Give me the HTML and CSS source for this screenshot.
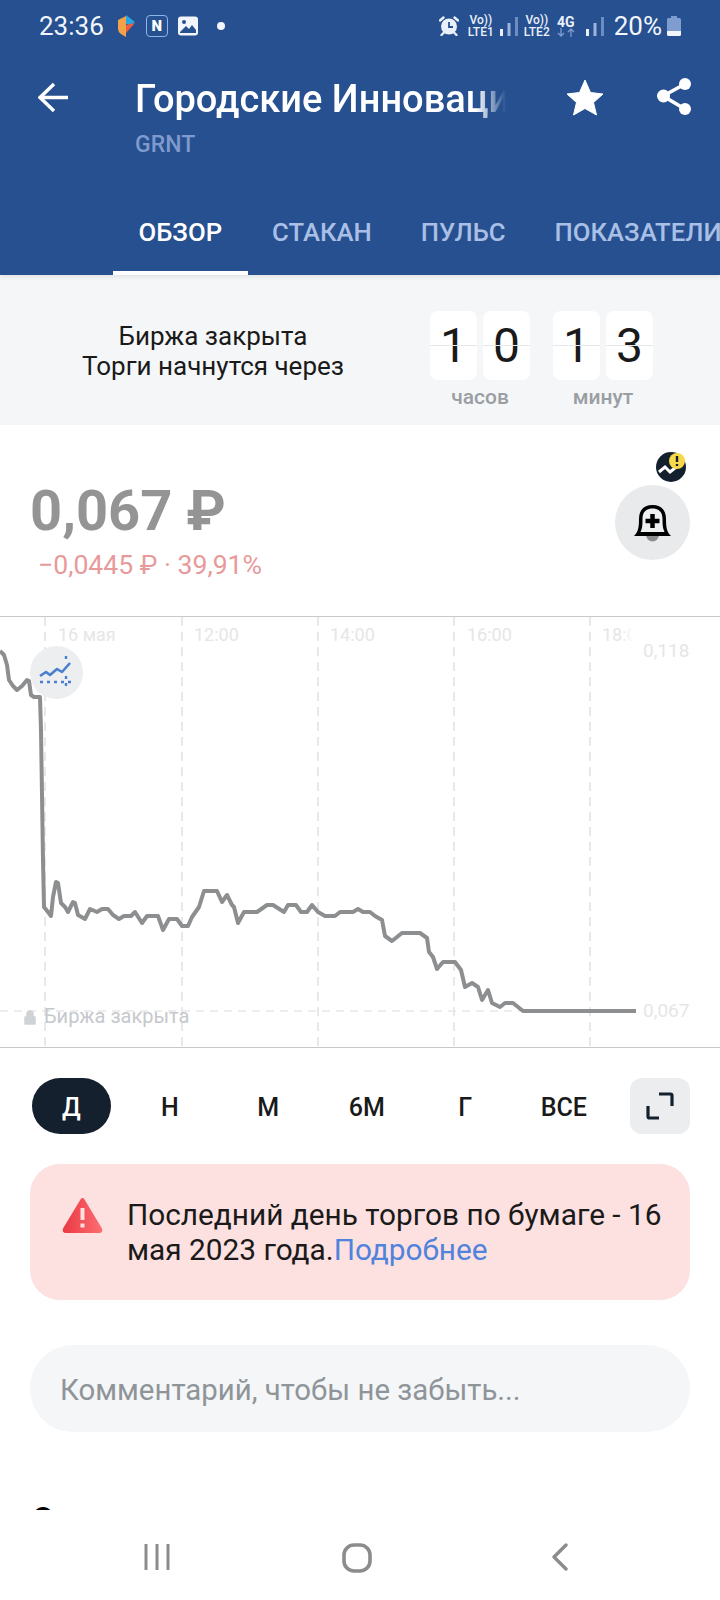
FILE: index.html
```html
<!DOCTYPE html>
<html lang="en">
<head>
    <meta charset="UTF-8">
    <title>Городские Инновации</title>
    <meta name="viewport" content="width=device-width, initial-scale=1.0">
    <link rel="stylesheet" href="styles.css">
</head>
<body>
    <div class="page">
        <header class="header">
            <div class="status-bar">
                <span class="status-time">23:36</span>
                <svg class="ic-p" viewBox="0 0 18 23"><path d="M0 5 L8 1 V22 L3 19 Q0 17 0 14Z" fill="#f2a24a"/><path d="M8 0 L17 7 L12 10 L8 9Z" fill="#2ba5e2"/><path d="M8 10 L17 8 L8 18Z" fill="#ee5b3d"/></svg>
                <span class="ic-n">N</span>
                <svg class="ic-pic" viewBox="0 0 20 20"><rect width="20" height="19" y="0.5" rx="3" fill="#f2f6fc"/><circle cx="6" cy="6" r="2" fill="#26508f"/><path d="M2 16 L8 10 L11 13 L14 9 L18 14 V17 H2Z" fill="#26508f"/></svg>
                <span class="status-dot"></span>
                <div class="status-right">
                    <svg class="ic-alarm" viewBox="0 0 20 20"><circle cx="10" cy="10.500" r="8" fill="#eaf0fa"/><path d="M10 6 V11 H14" fill="none" stroke="#26508f" stroke-width="1.800"/><path d="M1 4.500 L4.500 1.500 M19 4.500 L15.500 1.500 M4.500 17 L2.500 19 M15.500 17 L17.500 19" stroke="#eaf0fa" stroke-width="2.400" stroke-linecap="round"/></svg>
                    <span class="net net-1">Vo))<br>LTE1</span>
                    <svg class="ic-signal" viewBox="0 0 18 20"><rect x="0" y="13" width="3" height="7" fill="#eaf0fa"/><rect x="7.500" y="7" width="3" height="13" fill="#9db4dc"/><rect x="15" y="1" width="3" height="19" fill="#6d8cc2"/></svg>
                    <span class="net net-2">Vo))<br>LTE2</span>
                    <span class="net net-4g">4G<svg class="ic-arrows" viewBox="0 0 18 9"><path d="M4 0 V8 M1 5 L4 8 L7 5" fill="none" stroke="#7f9cce" stroke-width="1.300"/><path d="M14 9 V1 M11 4 L14 1 L17 4" fill="none" stroke="#7f9cce" stroke-width="1.300"/></svg></span>
                    <svg class="ic-signal ic-signal-2" viewBox="0 0 18 20"><rect x="0" y="13" width="3" height="7" fill="#eaf0fa"/><rect x="7.500" y="7" width="3" height="13" fill="#9db4dc"/><rect x="15" y="1" width="3" height="19" fill="#6d8cc2"/></svg>
                    <span class="status-pct">20%</span>
                    <svg class="ic-battery" viewBox="0 0 14 20"><path d="M4 0 H10 V2 H12.500 Q14 2 14 3.500 V15 H0 V3.500 Q0 2 1.500 2 H4Z" fill="#7f9cce"/><path d="M0 15 H14 V18.500 Q14 20 12.500 20 H1.500 Q0 20 0 18.500Z" fill="#f2f6fc"/></svg>
                </div>
            </div>
            <div class="app-bar">
                <svg class="ic-back" viewBox="0 0 30 44"><path d="M2 22.500 H30 M16 9 L2 22.500 L16 36" fill="none" stroke="#fff" stroke-width="3.400"/></svg>
                <div class="title-block">
                    <div class="title">Городские Инновации</div>
                    <div class="ticker">GRNT</div>
                </div>
                <svg class="ic-star" viewBox="0 0 38 44"><path d="M19 5 L24.500 17.500 L37 19 L27.500 27.500 L30.500 40 L19 33.500 L7.500 40 L10.500 27.500 L1 19 L13.500 17.500Z" fill="#fff" stroke="#fff" stroke-linejoin="round"/></svg>
                <svg class="ic-share" viewBox="0 0 36 44"><path d="M28 9 L6 21 L28 34" fill="none" stroke="#fff" stroke-width="3.600"/><circle cx="28" cy="9" r="6" fill="#fff"/><circle cx="6.500" cy="21" r="6.500" fill="#fff"/><circle cx="28" cy="34" r="6" fill="#fff"/></svg>
            </div>
            <nav class="tabs">
                <a class="tab active">ОБЗОР</a>
                <a class="tab">СТАКАН</a>
                <a class="tab">ПУЛЬС</a>
                <a class="tab">ПОКАЗАТЕЛИ</a>
            </nav>
        </header>

        <main class="main">
            <section class="timer">
                <div class="timer-text">Биржа закрыта<br>Торги начнутся через</div>
                <div class="timer-group">
                    <div class="digits"><span class="digit">1</span><span class="digit">0</span></div>
                    <div class="timer-label">часов</div>
                </div>
                <div class="timer-group">
                    <div class="digits"><span class="digit">1</span><span class="digit">3</span></div>
                    <div class="timer-label">минут</div>
                </div>
            </section>

            <section class="price-block">
                <div>
                    <div class="price">0,067 ₽</div>
                    <div class="change">−0,0445 ₽ · 39,91%</div>
                </div>
                <div class="bell">
                    <svg class="ic-bell" viewBox="0 0 37 38"><circle cx="18.500" cy="31" r="6.500" fill="#8d8d8d"/><path d="M0 32 C4 28 5 24 5 15 C5 6 10 1 18.500 1 S32 6 32 15 C32 24 33 28 37 32Z" fill="#000"/><path d="M6.500 28 C8.500 24 8.500 20 8.500 15 C8.500 8 12 4.500 18.500 4.500 S28.500 8 28.500 15 C28.500 20 28.500 24 30.500 28Z" fill="#eef0f1"/><path d="M18.500 10 V24 M11.500 17 H25.500" stroke="#000" stroke-width="4.500"/></svg>
                    <svg class="badge" viewBox="0 0 30 30"><circle cx="15" cy="15" r="15" fill="#15202e"/><path d="M3 20 L9 15 L14 20 L19 16 L25 12" fill="none" stroke="#fff" stroke-width="3"/><circle cx="21" cy="9" r="8" fill="#f6d84a"/><path d="M21 4 V10 M21 12 V14" stroke="#15202e" stroke-width="2.400"/></svg>
                </div>
            </section>

            <section class="chart">
                <svg class="chart-svg" viewBox="0 616 720 432">
                    <defs>
                        <linearGradient id="labelFade"><stop offset="0" stop-color="#fff" stop-opacity="0"/><stop offset="1" stop-color="#fff"/></linearGradient>
                    </defs>
                    <path class="grid-line" d="M45 617 V1047 M182 617 V1047 M318 617 V1047 M454 617 V1047 M590 617 V1047"/>
                    <path class="grid-line grid-thin" d="M0 1011 H520"/>
                    <text class="axis" x="58" y="641">16 мая</text>
                    <text class="axis" x="194" y="641">12:00</text>
                    <text class="axis" x="330" y="641">14:00</text>
                    <text class="axis" x="467" y="641">16:00</text>
                    <text class="axis" x="602" y="641">18:00</text>
                    <rect x="622" y="620" width="12" height="28" fill="url(#labelFade)"/>
                    <rect x="634" y="620" width="86" height="28" fill="#fff"/>
                    <text class="axis axis-price" x="643" y="657">0,118</text>
                    <text class="axis axis-price" x="643" y="1017">0,067</text>
                    <path class="price-line" d="M0 651 L4 655 L7 665 L9 680 L13 686 L17 690 L22 686 L27 680 L29 681 L31 695 L34 697 L40 697 L41 730 L43 860 L44 907 L48 912 L51 916 L53 897 L56 882 L58 883 L61 903 L65 907 L68 912 L73 902 L75 903 L78 915 L85 919 L90 909 L97 912 L102 909 L108 909 L113 915 L119 919 L124 916 L131 916 L135 912 L142 923 L147 916 L158 916 L163 930 L169 919 L177 919 L182 926 L188 926 L192 917 L199 907 L204 891 L217 891 L222 902 L227 895 L232 905 L234 907 L238 923 L244 912 L257 912 L267 905 L273 905 L284 912 L288 905 L296 905 L301 912 L307 912 L312 905 L318 912 L325 916 L335 916 L340 912 L353 912 L358 909 L363 912 L370 912 L375 916 L382 920 L385 936 L392 941 L402 933 L420 933 L427 938 L429 952 L433 957 L437 969 L443 962 L455 962 L461 970 L465 987 L472 983 L478 987 L482 1000 L488 990 L492 1003 L500 1007 L505 1003 L513 1003 L523 1011 L636 1011"/>
                    <circle cx="56.500" cy="672.500" r="26.500" fill="#eceef0"/>
                    <path d="M40 676 L46 672 L50 675 L57 669 L62 672 L70 663" fill="none" stroke="#4a7fd0" stroke-width="2.600" stroke-linejoin="round"/>
                    <path d="M40 682 H73 M66 656 V659 M66 676 V689" fill="none" stroke="#4a7fd0" stroke-width="2.400" stroke-dasharray="3 4"/>
                    <path d="M25 1017 H35 V1024 H25Z M27 1017 V1014 A3 3 0 0 1 33 1014 V1017" fill="#d0d3d6" stroke="#d0d3d6" stroke-width="1.500" stroke-linejoin="round"/>
                    <text class="closed" x="44" y="1023">Биржа закрыта</text>
                </svg>
            </section>

            <div class="ranges">
                <div class="range-list">
                    <span class="range active">Д</span>
                    <span class="range">Н</span>
                    <span class="range">М</span>
                    <span class="range">6М</span>
                    <span class="range">Г</span>
                    <span class="range">ВСЕ</span>
                </div>
                <button class="expand" type="button">
                    <svg viewBox="0 0 28 28" width="28" height="28"><path d="M13 2 H24.500 Q26 2 26 3.500 V14 M2 14 V24.500 Q2 26 3.500 26 H13" fill="none" stroke="#15202e" stroke-width="3.200"/></svg>
                </button>
            </div>

            <div class="alert">
                <svg class="ic-warn" viewBox="0 0 41 36">
                    <defs><linearGradient id="warnFill" x1="0" x2="1"><stop offset="0" stop-color="#ec3b45"/><stop offset="1" stop-color="#fb6c70"/></linearGradient></defs>
                    <path d="M20.500 3 L38 32 Q39 34 37 34 H4 Q2 34 3 32Z" fill="url(#warnFill)" stroke="url(#warnFill)" stroke-width="4" stroke-linejoin="round"/>
                    <path d="M20.500 11 V23 M20.500 26.500 V30.500" stroke="#fde0e0" stroke-width="4"/>
                </svg>
                <p class="alert-text">Последний день торгов по бумаге - 16<br>мая 2023 года.<a class="alert-link">Подробнее</a></p>
            </div>

            <div class="comment">Комментарий, чтобы не забыть...</div>

            <h2 class="section-title">О компании</h2>
        </main>

        <footer class="nav-bar">
            <svg class="ic-recent" viewBox="0 0 26 28"><path d="M2 1 V27 M13 1 V27 M24 1 V27" stroke="#8c8c8c" stroke-width="3"/></svg>
            <svg class="ic-home" viewBox="0 0 30 30"><rect x="2" y="2" width="26" height="26" rx="10" fill="none" stroke="#8c8c8c" stroke-width="3.600"/></svg>
            <svg class="ic-return" viewBox="0 0 17 28"><path d="M15 2 L3 14 L15 26" fill="none" stroke="#8c8c8c" stroke-width="3.400" stroke-linecap="round" stroke-linejoin="round"/></svg>
        </footer>
    </div>
</body>
</html>
```

FILE: styles.css
```css
body {
    margin: 0;
    font-family: Roboto, "Noto Sans", sans-serif;
    background: #fff;
    color: #1a1a1a;
}
svg {
    display: block;
    flex: none;
}
.page {
    display: flex;
    flex-direction: column;
    width: 720px;
    height: 1600px;
    overflow: hidden;
}

/* Blue header */
.header {
    position: relative;
    flex: none;
    background: #26508f;
    color: #fff;
    box-shadow: 0 2px 4px rgba(0, 0, 0, 0.08);
}
.status-bar {
    display: flex;
    align-items: center;
    height: 52px;
    padding: 0 39px 0 39px;
}
.status-time {
    font-size: 26px;
    color: #f2f6fc;
}
.ic-p {
    width: 18px;
    height: 23px;
    margin-left: 14px;
}
.ic-n {
    width: 20px;
    height: 20px;
    margin-left: 10px;
    border: 1.5px solid #8fb4e8;
    border-radius: 4px;
    font-size: 15px;
    font-weight: 900;
    line-height: 20px;
    text-align: center;
}
.ic-pic {
    width: 20px;
    height: 20px;
    margin-left: 10px;
}
.status-dot {
    width: 8px;
    height: 8px;
    margin-left: 19px;
    border-radius: 50%;
    background: #f2f6fc;
}
.status-right {
    display: flex;
    align-items: center;
    margin-left: auto;
}
.ic-alarm {
    width: 20px;
    height: 20px;
}
.net {
    font-size: 12px;
    font-weight: 500;
    line-height: 12px;
    text-align: center;
    color: #eaf0fa;
}
.net-1 {
    margin-left: 9px;
}
.net-2 {
    margin-left: 6px;
}
.net-4g {
    margin-left: 7px;
    font-size: 14px;
    font-weight: 700;
}
.ic-arrows {
    width: 18px;
    height: 9px;
}
.ic-signal {
    width: 18px;
    height: 20px;
    margin-left: 6px;
}
.ic-signal-2 {
    margin-left: 11px;
}
.status-pct {
    margin-left: 10px;
    font-size: 26px;
    color: #f2f6fc;
}
.ic-battery {
    width: 14px;
    height: 20px;
    margin-left: 5px;
}
.app-bar {
    display: flex;
    align-items: flex-start;
    height: 112px;
    padding: 23px 0 0 38px;
}
.ic-back {
    width: 30px;
    height: 44px;
    margin-right: 67px;
}
.title-block {
    width: 375px;
    padding-top: 2px;
}
.title {
    font-size: 38px;
    font-weight: 500;
    line-height: 44px;
    white-space: nowrap;
    overflow: hidden;
    -webkit-mask-image: linear-gradient(to right, #000 91%, transparent 99%);
    mask-image: linear-gradient(to right, #000 91%, transparent 99%);
}
.ticker {
    margin-top: 10px;
    font-size: 23px;
    font-weight: 500;
    line-height: 28px;
    color: #7f9ace;
}
.ic-star {
    width: 38px;
    height: 44px;
    margin-left: 56px;
}
.ic-share {
    width: 36px;
    height: 44px;
    margin-left: 53px;
}
.tabs {
    display: flex;
    height: 88px;
    padding-left: 113px;
    overflow: hidden;
}
.tab {
    flex: none;
    padding: 0 24.5px;
    font-size: 25.7px;
    font-weight: 500;
    line-height: 90px;
    color: #a9bfe6;
}
.tab.active {
    padding: 0 25.5px;
    color: #fff;
    box-shadow: inset 0 -4px 0 #fff;
}

/* Scrolling content */
.main {
    flex: 1;
    overflow: hidden;
}
.timer {
    display: flex;
    height: 150px;
    background: #f4f6f8;
}
.timer-text {
    width: 430px;
    padding-top: 46px;
    padding-right: 4px;
    box-sizing: border-box;
    font-size: 26px;
    line-height: 30px;
    text-align: center;
}
.timer-group {
    width: 100px;
    margin-right: 23px;
    padding-top: 36px;
}
.digits {
    display: flex;
    justify-content: space-between;
}
.digit {
    position: relative;
    width: 47px;
    height: 69px;
    border-radius: 8px;
    background: #fff;
    font-size: 48px;
    line-height: 69px;
    text-align: center;
}
.digit::after {
    content: "";
    position: absolute;
    left: 0;
    right: 0;
    top: 34px;
    height: 1px;
    background: #e6e8ea;
}
.timer-label {
    margin-top: 5px;
    font-size: 21px;
    font-weight: 500;
    line-height: 24px;
    text-align: center;
    color: #9a9ea3;
}
.price-block {
    display: flex;
    justify-content: space-between;
    height: 191px;
    padding: 0 30px 0 30px;
    box-sizing: border-box;
}
.price {
    margin-top: 53px;
    font-size: 56px;
    font-weight: 700;
    line-height: 66px;
    color: #949494;
}
.change {
    margin-top: 6px;
    padding-left: 8px;
    font-size: 26.6px;
    line-height: 30px;
    color: #e89a9a;
}
.bell {
    position: relative;
    display: flex;
    align-items: center;
    justify-content: center;
    width: 75px;
    height: 75px;
    margin-top: 60px;
    border-radius: 50%;
    background: #e8eaeb;
}
.ic-bell {
    width: 37px;
    height: 38px;
}
.badge {
    position: absolute;
    top: -33px;
    left: 41px;
    width: 30px;
    height: 30px;
}

/* Chart */
.chart {
    height: 432px;
    border-top: 1px solid #c8c8c8;
    border-bottom: 1px solid #c8c8c8;
    box-sizing: border-box;
}
.chart-svg {
    width: 720px;
    height: 432px;
    margin-top: -1px;
}
.grid-line {
    fill: none;
    stroke: #e8e8e9;
    stroke-width: 2;
    stroke-dasharray: 9 6;
}
.grid-thin {
    stroke-width: 1.5;
    stroke-dasharray: 8 6;
}
.axis {
    font-size: 18px;
    fill: #e6e6e6;
}
.axis-price {
    font-size: 19px;
}
.closed {
    font-size: 20px;
    fill: #c5c8cc;
}
.price-line {
    fill: none;
    stroke: #8c8e90;
    stroke-width: 4;
    stroke-linejoin: round;
}
.ranges {
    display: flex;
    justify-content: space-between;
    align-items: center;
    height: 56px;
    margin-top: 30px;
    padding: 0 30px 0 22px;
}
.range-list {
    display: grid;
    grid-template-columns: repeat(6, 98.5px);
}
.range {
    justify-self: center;
    width: 79px;
    height: 56px;
    font-size: 25px;
    font-weight: 500;
    line-height: 59px;
    text-align: center;
}
.range.active {
    border-radius: 28px;
    background: #15202e;
    color: #fff;
}
.expand {
    display: flex;
    align-items: center;
    justify-content: center;
    width: 60px;
    height: 56px;
    padding: 0;
    border: none;
    border-radius: 12px;
    background: #ebedef;
}
.alert {
    display: flex;
    align-items: flex-start;
    gap: 24px;
    height: 136px;
    margin: 30px 30px 0;
    padding: 33px 0 0 32px;
    box-sizing: border-box;
    border-radius: 30px;
    background: #fde0e0;
}
.ic-warn {
    width: 41px;
    height: 36px;
}
.alert-text {
    margin: 0;
    font-size: 29.8px;
    line-height: 35px;
}
.alert-link {
    color: #4f83dc;
}
.comment {
    height: 87px;
    margin: 45px 30px 0;
    padding-left: 30px;
    border-radius: 43px;
    background: #f4f6f8;
    font-size: 29.4px;
    line-height: 90px;
    color: #8f9499;
}
.section-title {
    margin: 66px 0 0;
    padding-left: 32px;
    font-size: 32px;
    line-height: 40px;
    color: #000;
}
.nav-bar {
    display: flex;
    flex: none;
    align-items: flex-start;
    height: 90px;
    padding: 33px 0 0 144px;
    box-sizing: border-box;
    background: #fff;
}
.ic-recent {
    width: 26px;
    height: 28px;
}
.ic-home {
    width: 30px;
    height: 30px;
    margin-left: 172px;
}
.ic-return {
    width: 17px;
    height: 28px;
    margin-left: 179px;
}
```
